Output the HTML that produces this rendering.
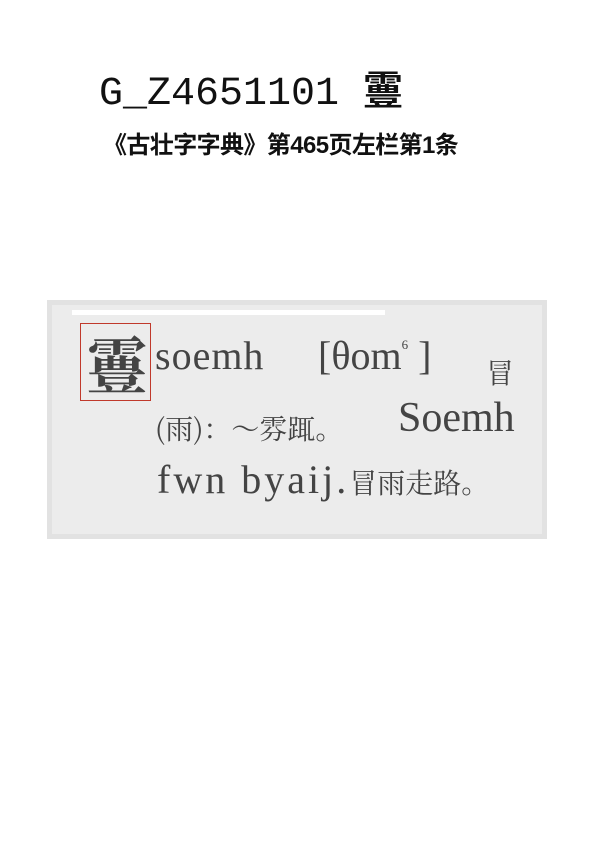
<!DOCTYPE html>
<html><head><meta charset="utf-8"><style>
body{margin:0;width:595px;height:842px;background:#fff;position:relative;overflow:hidden}
.a{position:absolute;white-space:nowrap}
</style></head><body>
<div class="a" style="left:99px;top:58px;font:40px 'Liberation Mono','Noto Serif CJK SC',monospace;color:#111">G_Z4651101 <span style="font-family:'Noto Sans CJK SC',sans-serif;font-weight:bold">霻</span></div>
<div class="a" style="left:103px;top:125px;font:bold 24px 'Liberation Sans','Noto Sans CJK SC',sans-serif;color:#111;letter-spacing:-0.6px">《古壮字字典》第465页左栏第1条</div>
<div class="a" style="left:47px;top:300px;width:500px;height:239px;background:#e2e2e2"></div>
<div class="a" style="left:52px;top:305px;width:490px;height:229px;background:#ececec"></div>
<div class="a" style="left:72px;top:310px;width:313px;height:5px;background:#fff"></div>
<div class="a" style="left:80px;top:323px;width:71px;height:78px;border:1px solid #c0392b;box-sizing:border-box"></div>
<div class="a" style="left:86px;top:326px;font:bold 62px 'Noto Serif CJK SC',serif;color:#444;line-height:72px">霻</div>
<div class="a" style="left:155px;top:332px;font:40px 'Liberation Serif','Noto Serif CJK SC',serif;color:#444;letter-spacing:1px">soemh</div>
<div class="a" style="left:318px;top:332px;font:40px 'Liberation Serif','Noto Serif CJK SC',serif;color:#444">[θom<sup style="font-size:13px;vertical-align:20px">6</sup> ]</div>
<div class="a" style="left:486px;top:352px;font:28px 'Noto Serif CJK SC',serif;color:#444">冒</div>
<div class="a" style="left:155px;top:408px;font:28px 'Noto Serif CJK SC',serif;color:#444">(雨)：～雰踂。</div>
<div class="a" style="left:398px;top:394px;font:42px 'Liberation Serif',serif;color:#444">Soemh</div>
<div class="a" style="left:157px;top:456px;font:40px 'Liberation Serif',serif;color:#444;letter-spacing:3px">fwn byaij.<span style="font:28px 'Noto Serif CJK SC',serif;letter-spacing:0">冒雨走路。</span></div>
</body></html>
